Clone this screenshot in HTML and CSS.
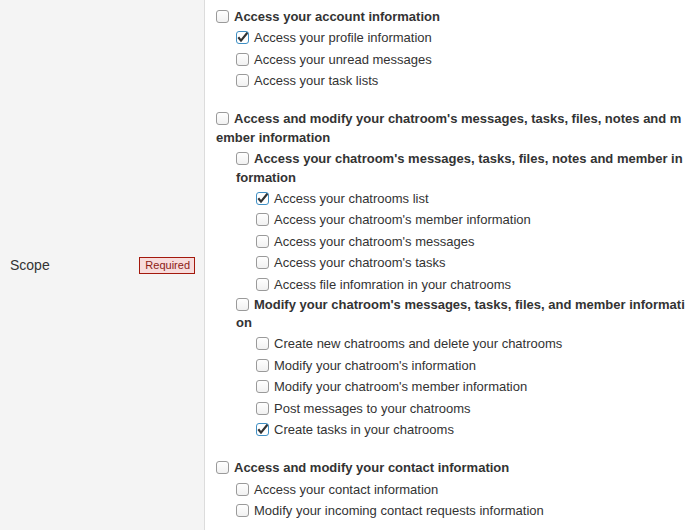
FILE: index.html
```
<!DOCTYPE html>
<html>
<head>
<meta charset="utf-8">
<link rel="stylesheet" href="styles.css">
</head>
<body>
<div class="form-row">
  <div class="label-col">
    <span class="field-label">Scope</span>
    <span class="badge">Required</span>
  </div>
  <div class="field-col">
    <ul class="tree">
      <li class="group">
        <label class="item bold"><input type="checkbox">Access your account information</label>
        <ul class="tree">
          <li><label class="item"><input type="checkbox" checked>Access your profile information</label></li>
          <li><label class="item"><input type="checkbox">Access your unread messages</label></li>
          <li><label class="item"><input type="checkbox">Access your task lists</label></li>
        </ul>
      </li>
      <li class="group">
        <label class="item bold"><input type="checkbox">Access and modify your chatroom's messages, tasks, files, notes and member information</label>
        <ul class="tree">
          <li class="sub-group">
            <label class="item bold"><input type="checkbox">Access your chatroom's messages, tasks, files, notes and member information</label>
            <ul class="tree sub">
              <li><label class="item"><input type="checkbox" checked>Access your chatrooms list</label></li>
              <li><label class="item"><input type="checkbox">Access your chatroom's member information</label></li>
              <li><label class="item"><input type="checkbox">Access your chatroom's messages</label></li>
              <li><label class="item"><input type="checkbox">Access your chatroom's tasks</label></li>
              <li><label class="item"><input type="checkbox">Access file infomration in your chatrooms</label></li>
            </ul>
          </li>
          <li class="sub-group">
            <label class="item bold"><input type="checkbox">Modify your chatroom's messages, tasks, files, and member information</label>
            <ul class="tree sub">
              <li><label class="item"><input type="checkbox">Create new chatrooms and delete your chatrooms</label></li>
              <li><label class="item"><input type="checkbox">Modify your chatroom's information</label></li>
              <li><label class="item"><input type="checkbox">Modify your chatroom's member information</label></li>
              <li><label class="item"><input type="checkbox">Post messages to your chatrooms</label></li>
              <li><label class="item"><input type="checkbox" checked>Create tasks in your chatrooms</label></li>
            </ul>
          </li>
        </ul>
      </li>
      <li class="group">
        <label class="item bold"><input type="checkbox">Access and modify your contact information</label>
        <ul class="tree">
          <li><label class="item"><input type="checkbox">Access your contact information</label></li>
          <li><label class="item"><input type="checkbox">Modify your incoming contact requests information</label></li>
        </ul>
      </li>
    </ul>
  </div>
</div>
</body>
</html>
```
FILE: styles.css
```
html, body {
  margin: 0;
  padding: 0;
  background: #fff;
}
body {
  font-family: "Liberation Sans", Arial, sans-serif;
  color: #333;
}
.form-row {
  display: flex;
  min-height: 530px;
}
.label-col {
  flex: none;
  width: 205px;
  background: #f4f4f4;
  border-right: 1px solid #dcdcdc;
  display: flex;
  align-items: center;
  padding: 0 9px 0 10px;
  box-sizing: border-box;
}
.field-label {
  font-size: 14px;
  color: #333;
}
.badge {
  margin-left: auto;
  font-size: 11px;
  line-height: 15px;
  padding: 0 4px 0 5px;
  color: #8c1a14;
  background: #f7dcdc;
  border: 1px solid #a3180c;
}
.field-col {
  flex: 1;
  min-width: 0;
  padding: 6px 5px 6px 11px;
}
.tree {
  list-style: none;
  margin: 0;
  padding: 0;
}
.tree .tree {
  padding-left: 20px;
}
.group {
  margin-bottom: 16.5px;
}
.group:last-child {
  margin-bottom: 0;
}
.sub {
  margin-top: -0.5px;
}
.sub-group + .sub-group {
  margin-top: -1.5px;
}
.item {
  display: block;
  font-size: 13px;
  line-height: 18.5px;
  padding: 1.5px 0;
  word-break: break-all;
}
.bold {
  font-weight: bold;
}
.item input {
  -webkit-appearance: none;
  appearance: none;
  width: 13px;
  height: 13px;
  margin: 0 5px 0 0;
  vertical-align: -2px;
  border: 1px solid #9a9a9a;
  border-radius: 3px;
  background: linear-gradient(#ffffff, #f1f1f1);
  box-sizing: border-box;
}
.item input:checked {
  border-color: #3f8fc4;
  background: #fff url("data:image/svg+xml;utf8,<svg xmlns='http://www.w3.org/2000/svg' viewBox='0 0 13 13'><path d='M2.3 6.3 L5 9.6 L11.8 1.2' fill='none' stroke='%23333' stroke-width='2.2'/></svg>") no-repeat center / 13px 13px;
}
```
